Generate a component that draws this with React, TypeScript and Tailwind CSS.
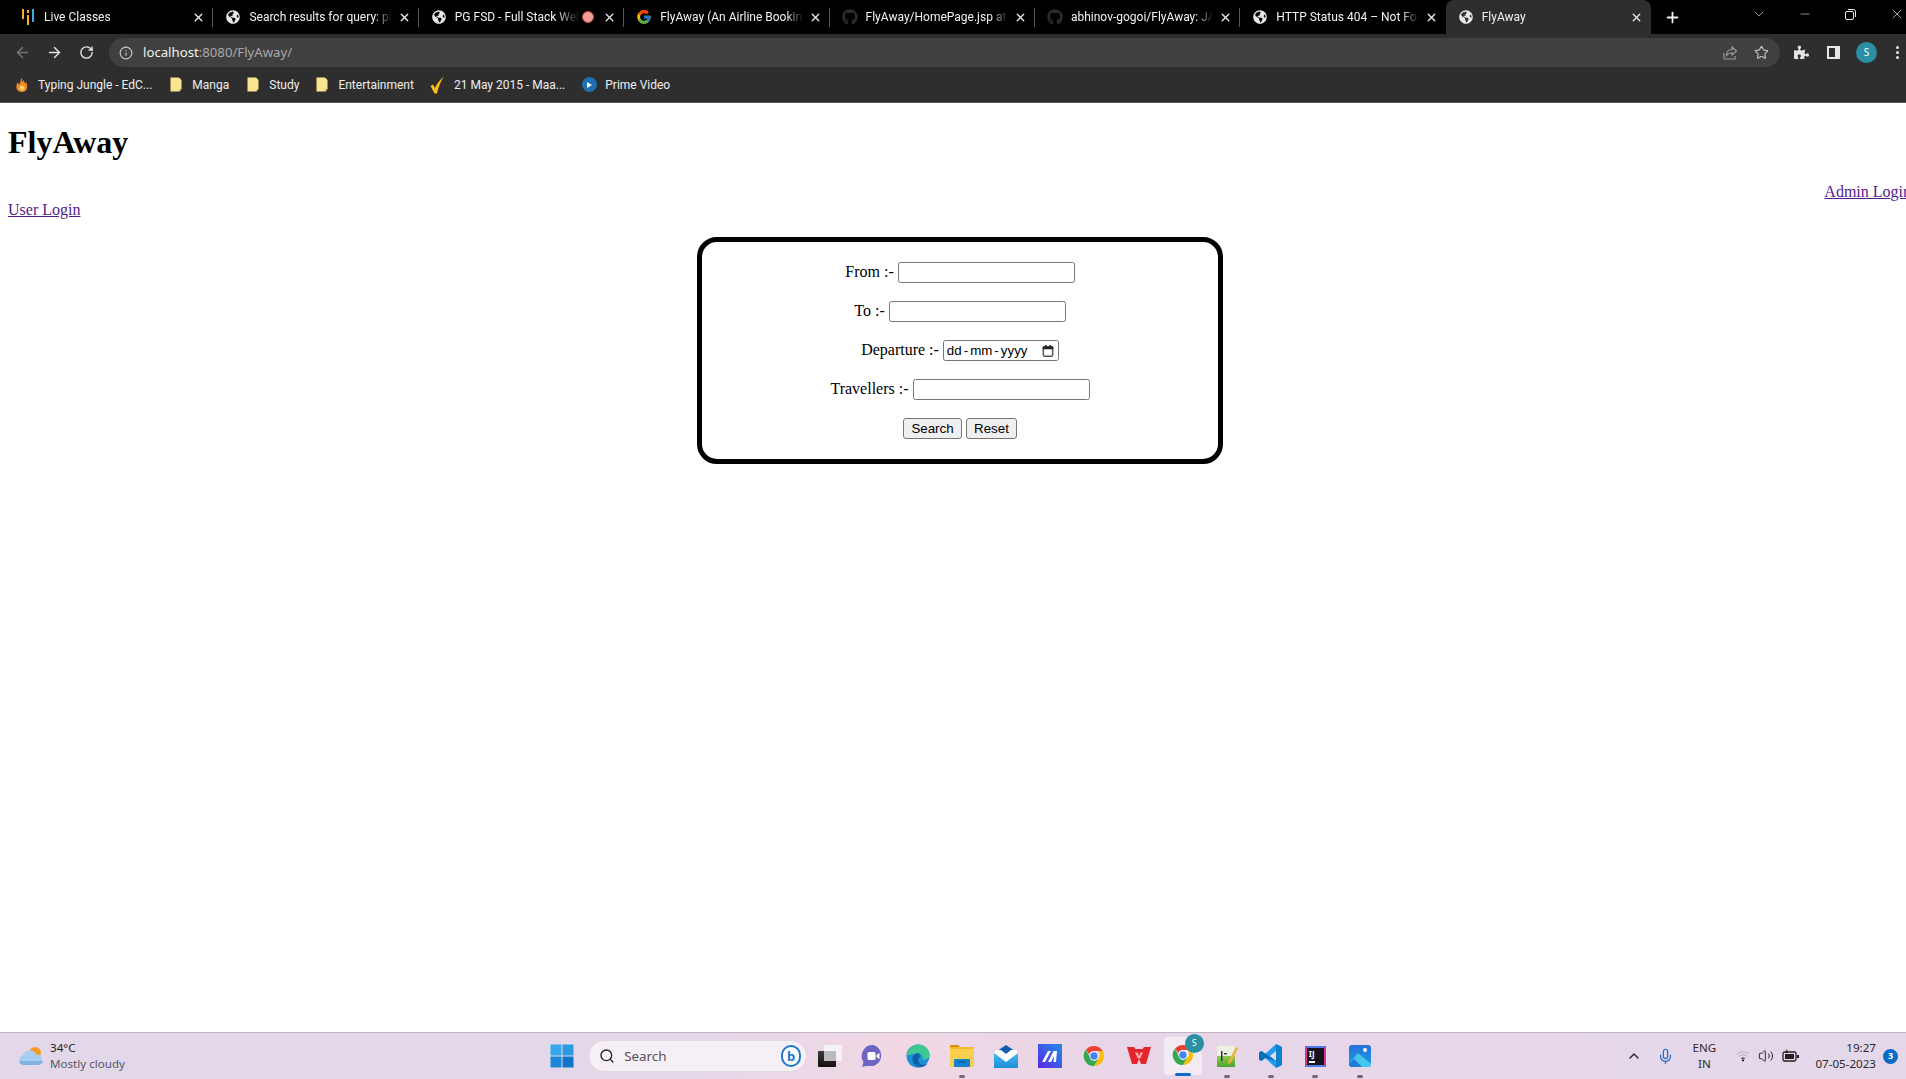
import React from "react";
import { FaGithub, FaGlobeAmericas, FaPuzzlePiece } from "react-icons/fa";
import { FcGoogle } from "react-icons/fc";
import { ArrowLeft, ArrowRight, RotateCw, Info, Star, X, Plus, ChevronDown, Minus, ChevronUp, Search, Mic, Volume2 } from "lucide-react";

const sans = "font-['Noto_Sans','Open_Sans',sans-serif]";

function LiveIcon() {
  return (
    <svg width="16" height="18" viewBox="0 0 16 18">
      <rect x="2" y="1" width="2" height="10" fill="#f5b21a" />
      <rect x="7" y="7" width="2" height="10" fill="#f5b21a" />
      <rect x="7" y="2" width="2" height="3" fill="#f5b21a" />
      <rect x="12" y="1" width="2" height="13" fill="#38a9e8" />
    </svg>
  );
}

function Tab({ icon, title, rec, active, hideSep }: { icon: React.ReactNode; title: string; rec?: boolean; active?: boolean; hideSep?: boolean }) {
  return (
    <div className={`relative flex h-[34px] w-[205.4px] shrink-0 items-center pl-[12px] pr-[8px] ${active ? "rounded-t-[8px] bg-[#2e2e2e]" : ""}`}>
      <div className="flex w-[16px] shrink-0 items-center justify-center">{icon}</div>
      <div className={`ml-[8px] min-w-0 flex-1 overflow-hidden whitespace-nowrap font-['Roboto',sans-serif] text-[12px] text-[#f2f2f2] ${rec ? "[mask-image:linear-gradient(to_right,#000_80%,transparent)]" : "[mask-image:linear-gradient(to_right,#000_88%,transparent)]"}`}>{title}</div>
      {rec && (
        <div className="ml-[2px] flex h-[12px] w-[12px] shrink-0 items-center justify-center rounded-full border border-[#c9473e] bg-[#ee9f96]" />
      )}
      <X size={13} strokeWidth={2.5} color="#e8e8e8" className={`${rec ? "ml-[9px]" : "ml-[6px]"} shrink-0`} />
      {!hideSep && <div className="absolute right-0 top-[8px] h-[19px] w-px bg-[#5a5a5a]" />}
    </div>
  );
}

function Folder() {
  return (
    <svg width="12" height="15" viewBox="0 0 12 15" className="shrink-0">
      <path d="M0.5 0.500h8.500l2.500 2.500v9l-2 2.500H0.5z" fill="#fce58f" />
      <path d="M9.500 14.500v-2.500h2z" fill="#b9a65a" />
    </svg>
  );
}

function BM({ icon, label, cls }: { icon: React.ReactNode; label: string; cls: string }) {
  return (
    <div className={`flex items-center ${cls}`}>
      <div className="flex w-[16px] shrink-0 items-center justify-center">{icon}</div>
      <span className="ml-[8px] whitespace-nowrap font-['Roboto',sans-serif] text-[12px] text-[#eeeeee]">{label}</span>
    </div>
  );
}

function ChromeLogo({ size = 24 }: { size?: number }) {
  return (
    <svg width={size} height={size} viewBox="0 0 48 48">
      <path d="M24 4a20 20 0 0 1 17.3 10H24a10 10 0 0 0-9.3 6.3L7.8 11.6A20 20 0 0 1 24 4z" fill="#ea4335" />
      <path d="M41.3 14A20 20 0 0 1 24 44l8.6-15a10 10 0 0 0-.3-15z" fill="#fbbc05" />
      <path d="M24 44A20 20 0 0 1 7.8 11.6L16.4 27a10 10 0 0 0 9.5 6.8L32.6 29z" fill="#34a853" />
      <circle cx="24" cy="24" r="9" fill="#fff" />
      <circle cx="24" cy="24" r="7.4" fill="#4285f4" />
    </svg>
  );
}

function TaskCell({ children, dot, active }: { children: React.ReactNode; dot?: boolean; active?: boolean }) {
  return (
    <div className="relative flex h-[46px] w-[44.2px] shrink-0 items-center justify-center">
      {active && <div className="absolute left-[3px] top-[4px] h-[38px] w-[38px] rounded-[4px] bg-white/50" />}
      <div className="relative flex items-center justify-center">{children}</div>
      {dot && <div className="absolute bottom-[1px] left-1/2 h-[3px] w-[6px] -translate-x-1/2 rounded-full bg-[#6f6a74]" />}
      {active && <div className="absolute bottom-[3px] left-1/2 h-[3px] w-[16px] -translate-x-1/2 rounded-full bg-[#0a6cc4]" />}
    </div>
  );
}

const tabs = [
  { icon: <LiveIcon />, title: "Live Classes" },
  { icon: <FaGlobeAmericas size={14} color="#e8e8e8" />, title: "Search results for query: php tutorial" },
  { icon: <FaGlobeAmericas size={14} color="#e8e8e8" />, title: "PG FSD - Full Stack Web Development", rec: true },
  { icon: <FcGoogle size={16} />, title: "FlyAway (An Airline Booking Portal)" },
  { icon: <FaGithub size={16} color="#2b2b2b" />, title: "FlyAway/HomePage.jsp at main" },
  { icon: <FaGithub size={16} color="#2b2b2b" />, title: "abhinov-gogoi/FlyAway: JAVA project" },
  { icon: <FaGlobeAmericas size={14} color="#e8e8e8" />, title: "HTTP Status 404 – Not Found page" },
];

function Field({ label }: { label: string }) {
  return (
    <div className="flex h-[21px] items-center justify-center gap-[4px]">
      <span className="mb-[2px]">{label}</span>
      <input type="text" className="h-[21px] w-[177px] rounded-[2.5px] border border-[#767676] bg-white" />
    </div>
  );
}

export default function App() {
  return (
    <div className={`flex h-[1079px] w-[1906px] flex-col overflow-hidden bg-white ${sans}`}>
      {/* browser chrome */}
      <div className="flex h-[34px] shrink-0 items-center bg-black pl-[8px]">
        {tabs.map((t, i) => (
          <Tab key={i} icon={t.icon} title={t.title} rec={t.rec} hideSep={i === 6} />
        ))}
        <Tab icon={<FaGlobeAmericas size={14} color="#e8e8e8" />} title="FlyAway" active hideSep />
        <Plus size={17} strokeWidth={2.5} color="#f2f2f2" className="ml-[13px]" />
        <ChevronDown size={16} strokeWidth={1} color="#dddddd" className="ml-[70px] mb-[6px]" />
        <Minus size={14} strokeWidth={1} color="#eeeeee" className="ml-[31px] mb-[6px]" />
        <svg width="11" height="11" viewBox="0 0 11 11" className="ml-[33px] mb-[6px]" fill="none" stroke="#eeeeee">
          <rect x="0.5" y="2.5" width="8" height="8" rx="1.5" />
          <path d="M3 .5h5.500a2 2 0 0 1 2 2V8" />
        </svg>
        <X size={16} strokeWidth={1} color="#eeeeee" className="ml-[33px] mb-[6px]" />
      </div>
      <div className="flex h-[34px] shrink-0 items-center bg-[#2e2e2e] pt-[3px]">
        <ArrowLeft size={17} color="#777777" strokeWidth={2} className="ml-[14px]" />
        <ArrowRight size={17} color="#e4e4e4" strokeWidth={2} className="ml-[15px]" />
        <RotateCw size={15} color="#e4e4e4" strokeWidth={2.2} className="ml-[16px]" />
        <div className="ml-[15px] flex h-[29px] w-[1671px] items-center rounded-full bg-[#404040] pl-[10px] pr-[11px]">
          <Info size={14} color="#c8c8c8" />
          <span className="ml-[10px] text-[13.2px] text-[#f0f0f0]">localhost<span className="text-[#a8a8a8]">:8080/FlyAway/</span></span>
          <svg width="16" height="16" viewBox="0 0 16 16" fill="none" stroke="#a0a0a0" strokeWidth="1.1" className="ml-auto">
            <path d="M2 8v6h11v-3" />
            <path d="M14.5 6 10 2v2.500C6.500 4.500 4.500 7 4.500 10.500 6 8.500 8 7.800 10 7.800V10z" />
          </svg>
          <Star size={15} color="#c4c4c4" strokeWidth={1.8} className="ml-[16px]" />
        </div>
        <FaPuzzlePiece size={15} color="#e4e4e4" className="ml-[14px]" />
        <svg width="13" height="13" viewBox="0 0 13 13" className="ml-[18px]">
          <path fillRule="evenodd" d="M0 0h13v13H0zM2 2v9h6V2z" fill="#e8e8e8" />
        </svg>
        <div className="ml-[16px] flex h-[21px] w-[21px] items-center justify-center rounded-full bg-[#2a8fa3] text-[10px] text-white">S</div>
        <div className="ml-[19px] flex flex-col gap-[2px]">
          <div className="h-[3px] w-[3px] rounded-full bg-[#e4e4e4]" />
          <div className="h-[3px] w-[3px] rounded-full bg-[#e4e4e4]" />
          <div className="h-[3px] w-[3px] rounded-full bg-[#e4e4e4]" />
        </div>
      </div>
      <div className="flex h-[35px] shrink-0 items-center border-b border-[#5c5c5c] bg-[#2e2e2e] pb-[1px] pl-[14px]">
        <BM
          cls=""
          icon={
            <svg width="18" height="18" viewBox="0 0 16 16">
              <path d="M8 1c1 2-1 3 0 4 1-1 1-2 1-2 2 1 1 3 2 3l1-1c2 3 2 10-4 10S1 9 4 5c0 2 1 2 2 2 0-3 1-5 2-6z" fill="#f08a24" />
              <circle cx="8" cy="11" r="2.500" fill="#fcd06a" />
            </svg>
          }
          label="Typing Jungle - EdC..."
        />
        <BM cls="ml-[16px]" icon={<Folder />} label="Manga" />
        <BM cls="ml-[16px]" icon={<Folder />} label="Study" />
        <BM cls="ml-[15px]" icon={<Folder />} label="Entertainment" />
        <BM
          cls="ml-[16px]"
          icon={
            <svg width="15" height="18" viewBox="0 0 15 18">
              <path d="M0.500 10l2.500-1.500 2 3.500c2-4.500 4.500-8 9-11.500-3.500 5-5.500 10.500-7 17H4.500z" fill="#f6bb1d" />
            </svg>
          }
          label="21 May 2015 - Maa..."
        />
        <BM
          cls="ml-[16px]"
          icon={
            <div className="flex h-[15px] w-[15px] items-center justify-center rounded-full bg-[#1f6fb5]">
              <div className="ml-[1px] h-0 w-0 border-y-[3px] border-l-[5px] border-y-transparent border-l-white" />
            </div>
          }
          label="Prime Video"
        />
      </div>

      {/* page */}
      <main className="min-h-0 flex-1 overflow-hidden font-['Liberation_Serif',serif] text-[16px] leading-[18px] text-black">
        <h1 className="ml-[8px] mt-[21px] text-[32px] font-bold leading-[37px]">FlyAway</h1>
        <div className="mr-[-5px] mt-[22px] flex justify-end">
          <a href="#" className="whitespace-nowrap text-[#551a8b] underline">Admin Login</a>
        </div>
        <div className="ml-[8px]">
          <a href="#" className="text-[#551a8b] underline">User Login</a>
        </div>
        <section className="ml-[697px] mt-[18px] flex h-[227px] w-[526px] flex-col gap-[18px] rounded-[20px] border-[5px] border-black pt-[20px]">
          <Field label="From :-" />
          <Field label="To :-" />
          <div className="flex h-[21px] items-center justify-center gap-[4px]">
            <span className="mb-[2px]">Departure :-</span>
            <div className="flex h-[21px] w-[116px] items-center rounded-[2.5px] border border-[#767676] bg-white pl-[3px] pr-[3px] font-['Liberation_Sans',sans-serif] text-[13.33px] leading-none">
              <span>dd</span><span className="mx-[2px]">-</span><span>mm</span><span className="mx-[2px]">-</span><span>yyyy</span>
              <svg width="14" height="14" viewBox="0 0 24 24" className="ml-auto" fill="none">
                <rect x="4" y="5" width="16" height="16" rx="2" stroke="#555555" strokeWidth="2.500" />
                <rect x="3" y="4" width="18" height="5" fill="#222222" />
                <rect x="7" y="1.500" width="2.500" height="4" fill="#222222" />
                <rect x="14.500" y="1.500" width="2.500" height="4" fill="#222222" />
              </svg>
            </div>
          </div>
          <Field label="Travellers :-" />
          <div className="flex h-[21px] items-center justify-center gap-[4px] font-['Liberation_Sans',sans-serif] text-[13.33px]">
            <button className="h-[21px] w-[59px] rounded-[3px] border border-[#767676] bg-[#efefef] text-black">Search</button>
            <button className="h-[21px] w-[51px] rounded-[3px] border border-[#767676] bg-[#efefef] text-black">Reset</button>
          </div>
        </section>
      </main>

      {/* taskbar */}
      <footer className="flex h-[47px] shrink-0 items-center border-t border-[#bdb5c4] bg-[linear-gradient(90deg,#e3d8ea_0%,#e3d8ea_35%,#f1d7e4_47%,#e8d6e8_58%,#e3d8ea_100%)]">
        <div className="flex w-[540px] shrink-0 items-center pl-[18px]">
          <svg width="26" height="22" viewBox="0 0 26 22">
            <circle cx="17" cy="8" r="6" fill="#f59a23" />
            <path d="M6 20a5 5 0 0 1-1-9.800 7 7 0 0 1 13-1 5.500 5.500 0 0 1 2 10.800z" fill="#a9cdf0" />
            <path d="M6 20a5 5 0 0 1-5-4h24a5.500 5.500 0 0 1-5 4z" fill="#7fb2e5" />
          </svg>
          <div className="ml-[6px] text-[11.6px] leading-[16px]">
            <div className="text-[#1d1d1d]">34°C</div>
            <div className="text-[#5a5560]">Mostly cloudy</div>
          </div>
        </div>
        <TaskCell>
          <svg width="24" height="24" viewBox="0 0 24 24">
            <rect x="0.500" y="0.500" width="11" height="11" fill="#35a7ea" />
            <rect x="12.500" y="0.500" width="11" height="11" fill="#2b9ae3" />
            <rect x="0.500" y="12.500" width="11" height="11" fill="#1b87d6" />
            <rect x="12.500" y="12.500" width="11" height="11" fill="#0f76c9" />
          </svg>
        </TaskCell>
        <div className="ml-[4px] flex h-[32px] w-[219px] shrink-0 items-center rounded-full border border-[#e2d6e2] bg-[#f6eff5] pl-[10px] pr-[5px]">
          <Search size={16} color="#222222" strokeWidth={2} />
          <span className="ml-[9px] text-[13.400px] text-[#55505a]">Search</span>
          <div className="ml-auto flex h-[22px] w-[20px] items-center justify-center rounded-[10px] border-2 border-[#1678d0] bg-white text-[13px] font-bold leading-none text-[#1678d0]">b</div>
        </div>
        <TaskCell>
          <svg width="24" height="22" viewBox="0 0 24 22" className="ml-[1px]">
            <defs>
              <linearGradient id="tvd" x1="0" y1="0" x2="0" y2="1">
                <stop offset="0" stopColor="#3a3a3a" />
                <stop offset="1" stopColor="#111111" />
              </linearGradient>
            </defs>
            <rect x="0" y="6" width="18" height="16" rx="1" fill="url(#tvd)" />
            <rect x="6" y="0" width="18" height="16" rx="1" fill="#f6f3f6" />
            <rect x="6" y="6" width="12" height="10" fill="#bdb9bd" />
          </svg>
        </TaskCell>
        <TaskCell>
          <svg width="24" height="24" viewBox="0 0 24 24">
            <path d="M12.500 1a11 11 0 0 1 0 21H5l-4 1 1.500-5A11 11 0 0 1 12.500 1z" fill="#6d65c4" />
            <rect x="6.500" y="8" width="8" height="8" rx="1.500" fill="#fff" />
            <path d="M15.500 11l3-2v6l-3-2z" fill="#fff" />
          </svg>
        </TaskCell>
        <TaskCell>
          <svg width="24" height="24" viewBox="0 0 24 24">
            <circle cx="12" cy="12" r="11.500" fill="#1c8fd8" />
            <path d="M1 11C2 4 7 .500 12 .500c6.500 0 11.500 5 11.500 10.500 0 3-2.500 4.500-5 4.500-2 0-3-.500-3-.500 2-1 2-5-3-5.500-5-.500-9 2-11.500 1.500z" fill="#3cc98f" />
            <path d="M13 9c-4 0-7 3-6.500 7 .500 4 4 7 8 7 3 0 5-1 6.500-3-4 2-9 0-9-4 0-1.500 1-2.500 2-3-1-3-1-4-1-4z" fill="#0f5fa8" />
          </svg>
        </TaskCell>
        <TaskCell dot>
          <svg width="24" height="24" viewBox="0 0 24 24">
            <path d="M0 2a1 1 0 0 1 1-1h7l2 2h-10z" fill="#d98f10" />
            <path d="M0 3h24v20H0z" fill="#f9cf4f" />
            <path d="M0 3h24v2H0z" fill="#f3b92f" />
            <rect x="4" y="15" width="16" height="8" rx="1" fill="#1780cc" />
            <rect x="8" y="17" width="8" height="1.500" fill="#0d5fa5" />
          </svg>
        </TaskCell>
        <TaskCell>
          <svg width="24" height="24" viewBox="0 0 24 24">
            <defs>
              <linearGradient id="mb" x1="0" y1="0" x2="0" y2="1">
                <stop offset="0" stopColor="#47b8f0" />
                <stop offset="1" stopColor="#1a8fd8" />
              </linearGradient>
            </defs>
            <path d="M12 1 24 9H0z" fill="#0f5fa8" />
            <path d="M0 9h24v15H0z" fill="url(#mb)" />
            <path d="M2 6h20l2 3-12 9L0 9z" fill="#ffffff" />
            <path d="M7 6h10l-5 4z" fill="#0f5fa8" />
          </svg>
        </TaskCell>
        <TaskCell>
          <svg width="24" height="24" viewBox="0 0 24 24">
            <defs>
              <linearGradient id="mc" x1="0" y1="1" x2="1" y2="0">
                <stop offset="0" stopColor="#5b25e8" />
                <stop offset="1" stopColor="#1f8fe8" />
              </linearGradient>
            </defs>
            <rect width="24" height="24" fill="url(#mc)" />
            <path d="M4 18 10 7h3L7 18zM10 18l5.500-11H19l-1 11h-2.500l.5-6-3 6z" fill="#fff" />
          </svg>
        </TaskCell>
        <TaskCell><ChromeLogo /></TaskCell>
        <TaskCell>
          <svg width="24" height="24" viewBox="0 0 24 24">
            <path d="M0 3h7l1.500 2h7L17 3h7l-5 17h-5l-2-5-2 5H5z" fill="#e3262b" />
            <path d="M8 8.500h2.500L12 12l1.500-3.500H16l-3 6h-2z" fill="#ffb3a8" />
          </svg>
        </TaskCell>
        <TaskCell active>
          <div className="relative mb-[3px]">
            <ChromeLogo />
            <div className="absolute right-[-9px] top-[-9px] flex h-[19px] w-[19px] items-center justify-center rounded-full bg-[#2a8fa3] text-[9px] text-white">S</div>
          </div>
        </TaskCell>
        <TaskCell dot>
          <svg width="24" height="24" viewBox="0 0 24 24">
            <defs>
              <linearGradient id="np" x1="0" y1="0" x2="0" y2="1">
                <stop offset="0" stopColor="#d8e87a" />
                <stop offset="1" stopColor="#4aa52c" />
              </linearGradient>
            </defs>
            <rect x="2" y="2" width="18" height="21" fill="url(#np)" />
            <rect x="2" y="2" width="18" height="10" fill="#eef0e2" />
            <rect x="6" y="7" width="1.500" height="10" fill="#333" />
            <rect x="9" y="9" width="3" height="1.500" fill="#444" />
            <path d="M13 18 21 3l2 1-7 15-3 1z" fill="#e8b23c" />
          </svg>
        </TaskCell>
        <TaskCell dot>
          <svg width="24" height="24" viewBox="0 0 24 24">
            <path d="M17 0 23 3v18l-6 3L6 14l-3.500 3L0 15.500v-7L2.500 7 6 10z" fill="#1f9cf0" />
            <path d="M17 7 11 12l6 5z" fill="#e5d8e9" />
            <path d="M17 0 23 3v18l-6 3z" fill="#0d82cf" />
            <path d="M0 8.500 2.500 7 17 17v0l-11-3-3.500 3L0 15.500z" fill="#0a6eb5" />
          </svg>
        </TaskCell>
        <TaskCell dot>
          <div className="flex h-[21px] w-[21px] flex-col justify-between border-2 border-x-[#d9318f] border-y-[#4d7bea] bg-[#18121f] px-[2px] py-[1px] text-[8px] font-bold leading-[9px] text-white">
            <span>IJ</span>
            <div className="mb-[1px] h-[1.500px] w-[6px] bg-white" />
          </div>
        </TaskCell>
        <TaskCell dot>
          <svg width="22" height="22" viewBox="0 0 22 22">
            <defs>
              <linearGradient id="ph" x1="0" y1="0" x2="0" y2="1">
                <stop offset="0" stopColor="#2670d8" />
                <stop offset="1" stopColor="#1e9fe5" />
              </linearGradient>
            </defs>
            <rect width="22" height="22" rx="3" fill="url(#ph)" />
            <circle cx="16" cy="5" r="2" fill="#ffffff" />
            <path d="M0 19 9 8l13 11v0a3 3 0 0 1-3 3H3a3 3 0 0 1-3-3z" fill="#45c6ee" />
            <path d="M0 19l5-5 8 8H3a3 3 0 0 1-3-3z" fill="#1f7bd8" />
          </svg>
        </TaskCell>
        <div className="ml-auto flex items-center">
          <ChevronUp size={16} color="#222222" strokeWidth={2} />
          <Mic size={17} color="#2b6fc4" strokeWidth={1.8} className="ml-[15px]" />
          <div className="ml-[11px] w-[38px] text-center text-[11.6px] leading-[16px] text-[#2a2a2a]">ENG<br />IN</div>
          <svg width="16" height="14" viewBox="0 0 16 16" fill="none" stroke="#b5b0b8" strokeWidth="1.200" className="ml-[12px]">
            <path d="M1 6a10 10 0 0 1 14 0M3.500 8.500a7 7 0 0 1 9 0" />
            <path d="M6 11a3.500 3.500 0 0 1 4 0" stroke="#222" />
            <circle cx="8" cy="13" r="1.200" fill="#222" stroke="none" />
          </svg>
          <Volume2 size={16} color="#2a2a2a" strokeWidth={1.500} className="ml-[7px]" />
          <svg width="18" height="14" viewBox="0 0 18 14" className="ml-[8px]">
            <rect x="1" y="3" width="13" height="9" rx="1.500" fill="none" stroke="#222" strokeWidth="1.300" />
            <rect x="3" y="5" width="9" height="5" fill="#222" />
            <rect x="15" y="6" width="2" height="3" fill="#222" />
            <path d="M5 0 3 4h3z" fill="#222" />
          </svg>
          <div className="ml-[15px] text-right text-[11.6px] leading-[16px] text-[#2a2a2a]">19:27<br />07-05-2023</div>
          <div className="ml-[7px] mr-[8px] flex h-[15px] w-[15px] items-center justify-center rounded-full bg-[#0a6cc4] text-[9px] font-bold text-white">3</div>
        </div>
      </footer>
    </div>
  );
}
